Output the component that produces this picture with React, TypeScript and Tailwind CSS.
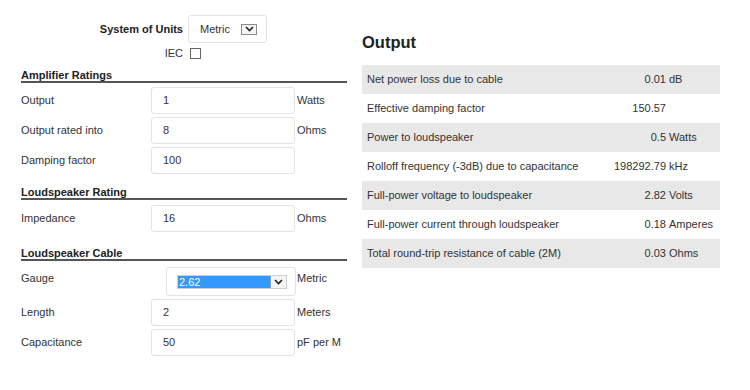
import React from "react";

const font = { fontFamily: '"Liberation Sans", Arial, sans-serif' };

interface FieldRowProps {
  label: string;
  value: string;
  unit?: string;
  className?: string;
}

const Chevron: React.FC = () => (
  <svg width="9" height="6" viewBox="0 0 9 6" fill="none">
    <path d="M1 1l3.5 3.5L8 1" stroke="#222" strokeWidth="1.6" />
  </svg>
);

const SectionHeader: React.FC<{ title: string; className?: string }> = ({ title, className }) => (
  <div className={`font-bold text-[11px] leading-[12px] text-[#222] border-b-2 border-[#555] ${className ?? ""}`}>
    {title}
  </div>
);

const FieldRow: React.FC<FieldRowProps> = ({ label, value, unit, className }) => (
  <div className={`flex items-center h-[27px] ${className ?? ""}`}>
    <div className="w-[130px] text-[11px] text-[#333]">{label}</div>
    <div className="w-[144px] h-[27px] flex items-center px-[11px] border border-[#e2e2e2] rounded-[3px] bg-white text-[11px] text-[#333]">
      {value}
    </div>
    {unit && <div className="ml-[2px] text-[11px] text-[#333]">{unit}</div>}
  </div>
);

const results = [
  { label: "Net power loss due to cable", value: "0.01", unit: "dB" },
  { label: "Effective damping factor", value: "150.57", unit: "" },
  { label: "Power to loudspeaker", value: "0.5", unit: "Watts" },
  { label: "Rolloff frequency (-3dB) due to capacitance", value: "198292.79", unit: "kHz" },
  { label: "Full-power voltage to loudspeaker", value: "2.82", unit: "Volts" },
  { label: "Full-power current through loudspeaker", value: "0.18", unit: "Amperes" },
  { label: "Total round-trip resistance of cable (2M)", value: "0.03", unit: "Ohms" },
];

export default function App() {
  return (
    <div className="w-[750px] h-[390px] bg-white flex overflow-hidden" style={font}>
      {/* inputs */}
      <div className="w-[347px] flex flex-col">
        <div className="flex items-center mt-[15px]">
          <div className="w-[183px] text-right font-bold text-[11px] text-[#222]">System of Units</div>
          <div className="ml-[5px] w-[79px] h-[28px] border border-[#e2e2e2] rounded-[3px] flex items-center pl-[11px] pr-[9px] justify-between">
            <span className="text-[11px] text-[#333]">Metric</span>
            <span className="w-[16px] h-[11px] border border-[#8a8a8a] bg-[#f4f4f4] flex items-center justify-center">
              <Chevron />
            </span>
          </div>
        </div>
        <div className="flex items-center mt-[4px] h-[12px]">
          <div className="w-[183px] text-right text-[11px] text-[#333]">IEC</div>
          <span className="ml-[7px] w-[11px] h-[11px] border border-[#666] bg-white" />
        </div>

        <div className="pl-[21px] flex flex-col">
          <SectionHeader title="Amplifier Ratings" className="mt-[10px]" />
          <FieldRow label="Output" value="1" unit="Watts" className="mt-[4px]" />
          <FieldRow label="Output rated into" value="8" unit="Ohms" className="mt-[3px]" />
          <FieldRow label="Damping factor" value="100" className="mt-[3px]" />

          <SectionHeader title="Loudspeaker Rating" className="mt-[12px]" />
          <FieldRow label="Impedance" value="16" unit="Ohms" className="mt-[5px]" />

          <SectionHeader title="Loudspeaker Cable" className="mt-[15px]" />
          <div className="flex items-start h-[29px] mt-[6px]">
            <div className="w-[145px] pt-[5px] text-[11px] leading-[13px] text-[#333]">Gauge</div>
            <div className="w-[130px] h-[29px] border border-[#e2e2e2] rounded-[3px] pl-[10px] pt-[7px]">
              <div className="flex w-[110px] h-[14px] border border-[#cfcfcf]">
                <div className="flex-1 bg-[#3399ff] text-white text-[11px] leading-[12px] pl-[1px]">2.62</div>
                <div className="w-[16px] bg-[#f4f4f4] border-l border-[#9a9a9a] flex items-center justify-center">
                  <Chevron />
                </div>
              </div>
            </div>
            <div className="ml-[1px] pt-[5px] text-[11px] leading-[13px] text-[#333]">Metric</div>
          </div>
          <FieldRow label="Length" value="2" unit="Meters" className="mt-[3px]" />
          <FieldRow label="Capacitance" value="50" unit="pF per M" className="mt-[3px]" />
        </div>
      </div>

      {/* output */}
      <div className="ml-[15px] w-[358px] flex flex-col">
        <div className="mt-[32px] font-bold text-[16.5px] leading-[20px] text-[#222]">Output</div>
        <div className="mt-[13px] flex flex-col">
          {results.map((r, i) => (
            <div
              key={r.label}
              className={`flex items-center h-[29px] text-[11px] text-[#333] ${i % 2 === 0 ? "bg-[#e8e8e8]" : "bg-white"}`}
            >
              <div className="flex-1 pl-[5px]">{r.label}</div>
              <div className="w-[60px] text-right">{r.value}</div>
              <div className="w-[54px] pl-[3px]">{r.unit}</div>
            </div>
          ))}
        </div>
      </div>
    </div>
  );
}
